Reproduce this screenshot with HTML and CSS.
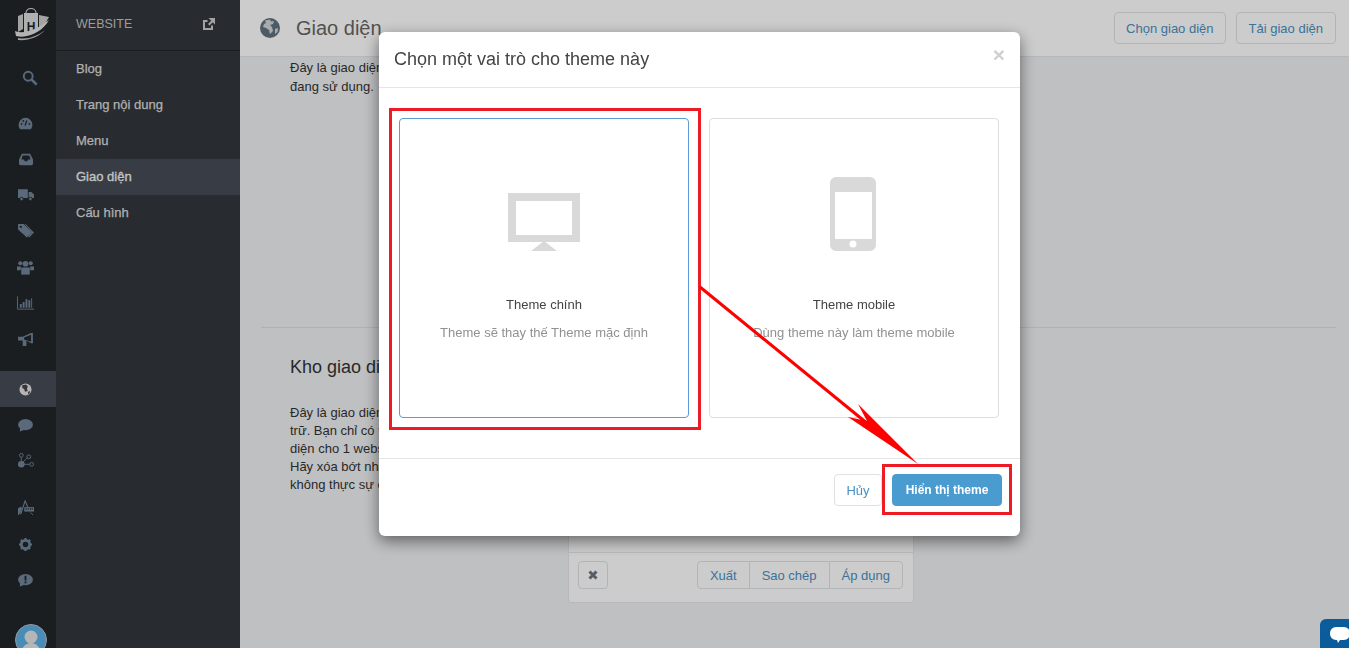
FILE: index.html
```html
<!DOCTYPE html>
<html>
<head>
  <meta charset="UTF-8">
  <title>Giao diện</title>
  <link rel="stylesheet" href="styles.css">
</head>
<body>
  <div class="app">
    <!-- thanh icon -->
    <nav class="rail">
      <div class="rail-logo">
        <svg width="35" height="33" viewBox="0 0 35 33">
          <path d="M11 5C11-1 21-1 21 5" fill="none" stroke="#ccc" stroke-width="1.200"/>
          <path d="M3 8l5-2v15l-5 3z" fill="#ccc"/>
          <path d="M9 5h14v16L9 25z" fill="#ddd"/>
          <path d="M24 7l10 2-5 9-5 3z" fill="#ccc"/>
          <text x="16" y="23" class="logo-h">H</text>
          <path d="M0 23c10 4 24-3 34-11-6 11-20 19-33 16z" fill="#e2e2e2"/>
          <path d="M3 30c10 2 20-2 27-8-6 7-17 11-27 10z" fill="#ccc"/>
        </svg>
      </div>
      <a class="rail-item rail-search">
        <svg width="16" height="16" viewBox="0 0 18 18"><circle cx="7" cy="7" r="5" fill="none" stroke="currentColor" stroke-width="2.200"/><path d="M11 11l5.500 5.500" stroke="currentColor" stroke-width="3"/></svg>
      </a>
      <div class="rail-group">
        <a class="rail-item">
          <svg width="15" height="13" viewBox="0 0 17 15"><path d="M8.500 1a8 8 0 0 0-8 8c0 2 .7 3.700 1.800 5h12.400a8 8 0 0 0 1.800-5 8 8 0 0 0-8-8z" fill="currentColor"/><path d="M8 10l2-6" stroke="#22262a" stroke-width="1.400"/><circle cx="4" cy="8" r="1" fill="#22262a"/><circle cx="13" cy="8" r="1" fill="#22262a"/><circle cx="6" cy="4.500" r="1" fill="#22262a"/></svg>
        </a>
        <a class="rail-item">
          <svg width="14" height="13" viewBox="0 0 17 14"><path d="M3.500 0h10l3.500 7v5a2 2 0 0 1-2 2H2a2 2 0 0 1-2-2V7z" fill="currentColor"/><path d="M4.500 2L3 7h3l1 2h3l1-2h3l-1.500-5z" fill="#22262a"/></svg>
        </a>
        <a class="rail-item">
          <svg width="16" height="12" viewBox="0 0 18 13"><path d="M0 0h11v10H0zM12 3h3l3 3v4h-6z" fill="currentColor"/><circle cx="4" cy="11" r="2" fill="currentColor" stroke="#22262a"/><circle cx="14" cy="11" r="2" fill="currentColor" stroke="#22262a"/></svg>
        </a>
        <a class="rail-item">
          <svg width="16" height="14" viewBox="0 0 17 15"><path d="M0 0h6l9 9-5.500 5.500L0 6z" fill="currentColor"/><path d="M8 0l9 9-5 5.500-1-1 4-4.500L7 0z" fill="currentColor"/><circle cx="3" cy="3" r="1.200" fill="#22262a"/></svg>
        </a>
        <a class="rail-item">
          <svg width="17" height="15" viewBox="0 0 18 15"><circle cx="3.500" cy="3" r="2.200" fill="currentColor"/><circle cx="14.500" cy="3" r="2.200" fill="currentColor"/><circle cx="9" cy="3.500" r="3" fill="currentColor"/><path d="M0 6.500h4v4H0zM14 6.500h4v4h-4z" fill="currentColor"/><path d="M4.500 7.500h9V15h-9z" fill="currentColor"/></svg>
        </a>
        <a class="rail-item">
          <svg width="17" height="14" viewBox="0 0 18 14"><path d="M.5 0v13.500H18" fill="none" stroke="currentColor"/><path d="M3 8h2v4H3zM6 6h2v6H6zM9 3h2v9H9zM12 4h2v8h-2z" fill="currentColor"/><path d="M15 2h1v10h-1z" fill="currentColor"/></svg>
        </a>
        <a class="rail-item">
          <svg width="15" height="13" viewBox="0 0 16 14"><path d="M0 4h5l9-4h2v11h-2L9 8v6H5V8H0z" fill="currentColor"/><path d="M6.500 4.800l7.500-3v7.600L6.500 7z" fill="#22262a"/></svg>
        </a>
      </div>
      <div class="rail-group">
        <a class="rail-item active">
          <svg width="13" height="13" viewBox="0 0 14 14"><circle cx="7" cy="7" r="6.500" fill="#e2e2e2"/><path d="M3.500 2.500l4-1 2 2-1 3 1 2-3 1-1-3-2-1zM10 9.500l2-1-.5 2.500-2 1z" fill="#444"/></svg>
        </a>
        <a class="rail-item">
          <svg width="15" height="13" viewBox="0 0 16 14"><ellipse cx="8" cy="6" rx="8" ry="6" fill="currentColor"/><path d="M2 9.500v4l5-2z" fill="currentColor"/></svg>
        </a>
        <a class="rail-item">
          <svg width="16" height="16" viewBox="0 0 17 17"><circle cx="3.500" cy="12" r="3.500" fill="currentColor"/><circle cx="3.500" cy="2.500" r="2" fill="none" stroke="currentColor"/><circle cx="11.500" cy="4" r="2" fill="none" stroke="currentColor"/><circle cx="14.500" cy="12" r="2" fill="none" stroke="currentColor"/><path d="M3.500 4.500V9M5 10l5-5M6 12h6.500" stroke="currentColor"/></svg>
        </a>
      </div>
      <div class="rail-group rail-tools">
        <a class="rail-item">
          <svg width="16" height="16" viewBox="0 0 18 18"><path d="M3 16L8 1l3 7" fill="none" stroke="currentColor" stroke-width="1.300"/><path d="M7 8h11v5H7z" fill="currentColor"/><path d="M9 9v2M11.500 9v2M14 9v2M16 9v2" stroke="#22262a"/><path d="M0 10l3-2 1 1-2 6-2 2zM14 14l3 3" stroke="currentColor" fill="currentColor"/></svg>
        </a>
        <a class="rail-item">
          <svg width="13" height="13" viewBox="0 0 14 14"><circle cx="7" cy="7" r="4.500" fill="none" stroke="currentColor" stroke-width="3"/><path d="M7 0v14M0 7h14M2 2l10 10M12 2L2 12" stroke="currentColor" stroke-width="2.400" stroke-dasharray="2.500 9 2.500"/></svg>
        </a>
        <a class="rail-item">
          <svg width="15" height="13" viewBox="0 0 16 14"><ellipse cx="8" cy="6" rx="8" ry="6" fill="currentColor"/><path d="M2 9.500v4l5-2z" fill="currentColor"/><path d="M7 2h2v5H7zM7 8h2v2H7z" fill="#22262a"/></svg>
        </a>
      </div>
      <div class="avatar">
        <svg width="30" height="30" viewBox="0 0 30 30"><circle cx="15" cy="12" r="6.500" fill="#e4e4e4"/><path d="M5 30c0-8 5-12 10-12s10 4 10 12z" fill="#e4e4e4"/></svg>
      </div>
    </nav>

    <!-- menu con -->
    <aside class="subnav">
      <div class="subnav-head">
        <span>WEBSITE</span>
        <svg width="13" height="13" viewBox="0 0 13 13"><path d="M10 7.500V11H2V3h3.500" fill="none" stroke="#ccc" stroke-width="2"/><path d="M6.500 0H13v6.500zM6 6l4-4 1.500 1.500-4 4z" fill="#ccc"/></svg>
      </div>
      <a class="subnav-item">Blog</a>
      <a class="subnav-item">Trang nội dung</a>
      <a class="subnav-item">Menu</a>
      <a class="subnav-item active">Giao diện</a>
      <a class="subnav-item">Cấu hình</a>
    </aside>

    <main class="main">
      <header class="topbar">
        <div class="page-title">
          <svg width="20" height="20" viewBox="0 0 20 20"><circle cx="10" cy="10" r="10" fill="#5f7283"/><path d="M5 2.500l5-1 1 2 3-.5-1 3-3 1 2 2 1 4-3 3-1-4-3-2-3-1 1-3 2-1z" fill="#d6d6d6"/><path d="M15 11l3-1-.5 4-2.500 2z" fill="#d6d6d6"/></svg>
          <h1>Giao diện</h1>
        </div>
        <div class="topbar-actions">
          <button type="button" class="btn btn-choose">Chọn giao diện</button>
          <button type="button" class="btn">Tải giao diện</button>
        </div>
      </header>
      <div class="content">
        <section class="section-current">
          <p>Đây là giao diện<br>đang sử dụng.</p>
        </section>
        <section class="section-store">
          <div class="store-info">
            <h2>Kho giao diện</h2>
            <p>Đây là giao diện<br>trữ. Bạn chỉ có thể<br>diện cho 1 website.<br>Hãy xóa bớt những<br>không thực sự cần.</p>
          </div>
          <div class="theme-card">
            <div class="theme-card-foot">
              <button type="button" class="btn btn-icon">
                <svg width="10" height="10" viewBox="0 0 10 10"><path d="M1.500 1.500l7 7M8.500 1.500l-7 7" stroke="#6b7680" stroke-width="3"/></svg>
              </button>
              <div class="btn-group">
                <button type="button" class="btn">Xuất</button>
                <button type="button" class="btn">Sao chép</button>
                <button type="button" class="btn">Áp dụng</button>
              </div>
            </div>
          </div>
        </section>
      </div>
    </main>
  </div>

  <div class="backdrop"></div>

  <!-- hộp thoại chọn vai trò -->
  <div class="modal">
    <div class="modal-head">
      <h3>Chọn một vai trò cho theme này</h3>
      <span class="modal-close">×</span>
    </div>
    <div class="modal-body">
      <div class="role-card selected">
        <div class="role-icon">
          <svg width="72" height="58" viewBox="0 0 72 58"><path d="M0 0h72v49H0zM8 8v34h56V8z" fill="#d9d9d9" fill-rule="evenodd"/><path d="M36 48l13 10H23z" fill="#d9d9d9"/></svg>
        </div>
        <div class="role-name">Theme chính</div>
        <div class="role-desc">Theme sẽ thay thế Theme mặc định</div>
      </div>
      <div class="role-card">
        <div class="role-icon role-icon-phone">
          <svg width="46" height="74" viewBox="0 0 46 74"><path d="M6 0h34a6 6 0 0 1 6 6v62a6 6 0 0 1-6 6H6a6 6 0 0 1-6-6V6a6 6 0 0 1 6-6zM5 15v47h37V15z" fill="#d9d9d9" fill-rule="evenodd"/><circle cx="23" cy="67" r="3.500" fill="#fff"/></svg>
        </div>
        <div class="role-name">Theme mobile</div>
        <div class="role-desc">Dùng theme này làm theme mobile</div>
      </div>
    </div>
    <div class="modal-foot">
      <button type="button" class="btn btn-cancel">Hủy</button>
      <button type="button" class="btn btn-primary">Hiển thị theme</button>
    </div>
  </div>

  <!-- khung và mũi tên chú thích -->
  <svg class="notes" width="1349" height="648" viewBox="0 0 1349 648">
    <rect x="390.500" y="109.500" width="309" height="319" fill="none" stroke="#ed1c24" stroke-width="3"/>
    <rect x="883.500" y="465.500" width="127" height="48" fill="none" stroke="#ed1c24" stroke-width="3"/>
    <path d="M700 287L868 424" stroke="#f00" stroke-width="3"/>
    <path d="M918 464L858 404 867 421 848 417z" fill="#f00"/>
  </svg>

  <div class="chat-tab">
    <svg width="20" height="17" viewBox="0 0 20 17"><path d="M6 0h8a6 6 0 0 1 6 6v1a6 6 0 0 1-6 6h-4l-2 3-1-3H6a6 6 0 0 1-6-6V6a6 6 0 0 1 6-6z" fill="#fff"/></svg>
  </div>
</body>
</html>
```

FILE: styles.css
```css
html, body {
  height: 100%;
  margin: 0;
  overflow: hidden;
}
body {
  font-family: "Liberation Sans", Arial, sans-serif;
  font-size: 13px;
  color: #333;
  background: #eff0f2;
}
button {
  font-family: inherit;
}
.app {
  display: flex;
  height: 648px;
}

/* rail */
.rail {
  width: 56px;
  flex: none;
  background: #22262a;
  color: #71859a;
  display: flex;
  flex-direction: column;
  overflow: hidden;
}
.rail > * {
  flex: none;
}
.rail-logo {
  height: 50px;
  display: flex;
  align-items: center;
  justify-content: center;
  padding-left: 8px;
  padding-bottom: 2px;
  box-sizing: border-box;
}
.logo-h {
  font-family: "Liberation Sans", sans-serif;
  font-size: 12px;
  font-weight: bold;
  fill: #22262a;
  text-anchor: middle;
}
.rail-item {
  height: 36px;
  box-sizing: border-box;
  padding-right: 5px;
  display: flex;
  align-items: center;
  justify-content: center;
}
.rail-item.active {
  background: #464b55;
}
.rail-search {
  margin-top: 10px;
  padding: 0 0 0 3px;
}
.rail-group {
  margin-top: 14px;
}
.rail-search + .rail-group {
  margin-top: 9px;
}
.rail-group.rail-tools {
  margin-top: 11px;
}
.avatar {
  width: 30px;
  height: 30px;
  margin: 26px 0 0 15px;
  border-radius: 50%;
  background: #5db0e6;
  border: 1px solid #bbb;
  overflow: hidden;
}

/* menu con */
.subnav {
  width: 184px;
  flex: none;
  background: #32363b;
}
.subnav-head {
  height: 51px;
  box-sizing: border-box;
  padding: 0 25px 2px 20px;
  display: flex;
  align-items: center;
  justify-content: space-between;
  border-bottom: 1px solid #24272b;
  color: #c4c4c4;
  font-size: 12.500px;
}
.subnav-item {
  display: block;
  height: 36px;
  line-height: 36px;
  padding-left: 20px;
  color: #dcdcdc;
  font-size: 13px;
  -webkit-text-stroke: 0.25px #dcdcdc;
}
.subnav-item.active {
  background: #464b55;
  color: #f4f4f4;
  -webkit-text-stroke: 0.3px #f4f4f4;
}

/* nội dung */
.main {
  flex: 1;
  min-width: 0;
}
.topbar {
  height: 57px;
  box-sizing: border-box;
  background: #fff;
  border-bottom: 1px solid #e4e5e7;
  padding: 0 13px 0 20px;
  display: flex;
  align-items: center;
  justify-content: space-between;
}
.page-title {
  display: flex;
  align-items: center;
  gap: 16px;
}
.page-title h1 {
  margin: 0;
  font-size: 20px;
  font-weight: normal;
  color: #666;
}
.topbar-actions {
  display: flex;
  gap: 10px;
}
.btn {
  height: 32px;
  padding: 0 12px;
  background: #fff;
  border: 1px solid #dfe2e5;
  border-radius: 4px;
  color: #4a90c2;
  font-size: 13px;
}
.btn-choose {
  padding: 0 11px;
}
.content {
  padding: 0 13px 0 21px;
}
.section-current {
  height: 270px;
  box-sizing: border-box;
  padding: 2px 0 0 29px;
}
.section-current p {
  margin: 0;
  line-height: 18.500px;
}
.section-store {
  border-top: 1px solid #dcdee0;
  padding-left: 29px;
  display: flex;
}
.store-info {
  width: 278px;
  flex: none;
}
.store-info h2 {
  margin: 29px 0 27px;
  font-size: 18px;
  line-height: 20px;
  font-weight: normal;
  color: #333;
}
.store-info p {
  margin: 0;
  line-height: 18px;
}
.theme-card {
  width: 346px;
  height: 200px;
  margin-top: 75px;
  box-sizing: border-box;
  background: #fff;
  border: 1px solid #e6e7e9;
  border-radius: 3px;
  display: flex;
  flex-direction: column;
  justify-content: flex-end;
}
.theme-card-foot {
  height: 50px;
  box-sizing: border-box;
  border-top: 1px solid #e6e7e9;
  padding: 8px 10px 8px 9px;
  display: flex;
  justify-content: space-between;
}
.theme-card-foot .btn {
  height: 28px;
}
.theme-card-foot .btn-icon {
  width: 30px;
  padding: 0;
}
.btn-group {
  display: flex;
}
.btn-group .btn {
  border-radius: 0;
  margin-left: -1px;
}
.btn-group .btn:first-child {
  border-radius: 4px 0 0 4px;
}
.btn-group .btn:last-child {
  border-radius: 0 4px 4px 0;
}

/* hộp thoại */
.backdrop {
  position: fixed;
  inset: 0;
  background: rgba(0,0,0,0.2);
}
.modal {
  position: fixed;
  left: 379px;
  top: 32px;
  width: 641px;
  height: 504px;
  background: #fff;
  border-radius: 6px;
  box-shadow: 0 5px 15px rgba(0,0,0,0.5);
  display: flex;
  flex-direction: column;
}
.modal-head {
  height: 56px;
  flex: none;
  box-sizing: border-box;
  padding: 0 15px;
  border-bottom: 1px solid #e5e5e5;
  display: flex;
  align-items: center;
  justify-content: space-between;
}
.modal-head h3 {
  margin: 0;
  font-size: 18px;
  font-weight: normal;
  color: #444;
}
.modal-close {
  font-size: 21px;
  font-weight: bold;
  color: #cfcfcf;
  margin-top: -10px;
}
.modal-body {
  flex: 1;
  padding: 30px 21px 0 20px;
  display: flex;
  gap: 20px;
  box-sizing: border-box;
}
.role-card {
  width: 290px;
  height: 300px;
  box-sizing: border-box;
  border: 1px solid #ddd;
  border-radius: 4px;
  padding-top: 58px;
  text-align: center;
}
.role-card.selected {
  border-color: #5b9bd5;
}
.role-icon {
  height: 74px;
  display: flex;
  justify-content: center;
  margin-bottom: 45px;
}
.role-card.selected .role-icon {
  padding-top: 16px;
  height: 58px;
}
.role-icon-phone {
  padding-right: 2px;
}
.role-name {
  font-size: 13px;
  line-height: 18px;
  color: #444;
}
.role-desc {
  margin-top: 10px;
  font-size: 13px;
  line-height: 18px;
  color: #919191;
}
.modal-foot {
  height: 78px;
  flex: none;
  box-sizing: border-box;
  border-top: 1px solid #e5e5e5;
  padding: 15px 18px 0 0;
  display: flex;
  justify-content: flex-end;
  align-items: flex-start;
  gap: 10px;
}
.btn-cancel {
  width: 48px;
  padding: 0;
}
.btn-primary {
  width: 110px;
  padding: 0;
  background: #4a9bd0;
  border-color: #4a9bd0;
  color: #fff;
  font-size: 12px;
  font-weight: bold;
}

/* chú thích */
.notes {
  position: fixed;
  left: 0;
  top: 0;
  pointer-events: none;
}
.chat-tab {
  position: fixed;
  right: 0;
  bottom: 0;
  width: 29px;
  height: 29px;
  background: #0b5c9a;
  border-top-left-radius: 6px;
  display: flex;
  align-items: flex-start;
  justify-content: flex-end;
}
.chat-tab svg {
  margin: 8px -1px 0 0;
}
```
